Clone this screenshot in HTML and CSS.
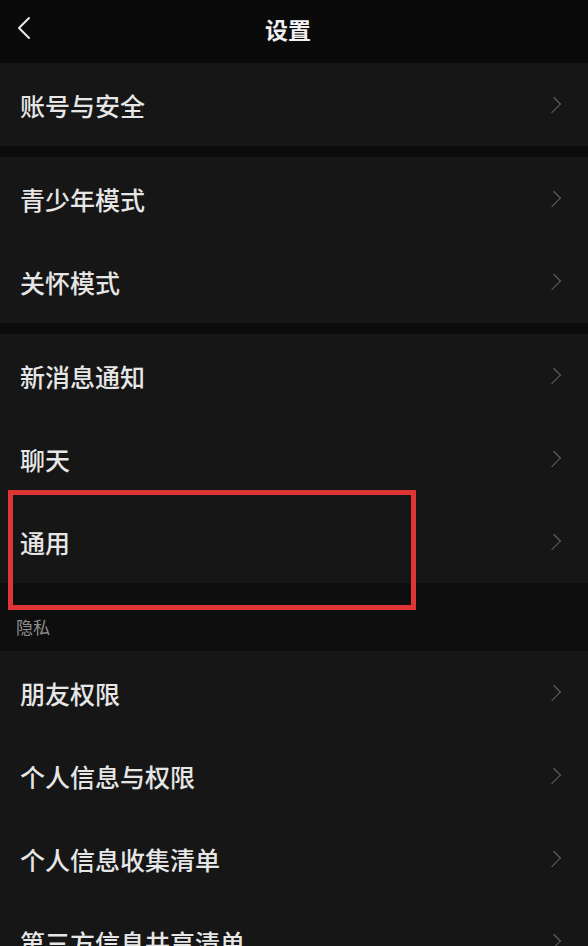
FILE: index.html
```html
<!doctype html>
<html lang="zh-CN">

<head>
  <meta charset="UTF-8" />
  <meta name="viewport" content="width=device-width, initial-scale=1.0" />
  <title>设置</title>
  <link rel="stylesheet" href="styles.css">
</head>

<body>
  <header class="nav">
    <svg class="back" width="14" height="24" viewBox="0 0 14 24">
      <path d="M12 2 L2 12 L12 22" fill="none" stroke="#e8e8e8" stroke-width="2" stroke-linecap="round" stroke-linejoin="round" />
    </svg>
    <h1 class="title">设置</h1>
  </header>

  <section class="group">
    <div class="row"><span>账号与安全</span><i class="arrow"></i></div>
  </section>

  <section class="group">
    <div class="row"><span>青少年模式</span><i class="arrow"></i></div>
    <div class="row"><span>关怀模式</span><i class="arrow"></i></div>
  </section>

  <section class="group">
    <div class="row"><span>新消息通知</span><i class="arrow"></i></div>
    <div class="row"><span>聊天</span><i class="arrow"></i></div>
    <div class="row marked"><span>通用</span><i class="arrow"></i></div>
  </section>

  <div class="label">隐私</div>

  <section class="group">
    <div class="row"><span>朋友权限</span><i class="arrow"></i></div>
    <div class="row"><span>个人信息与权限</span><i class="arrow"></i></div>
    <div class="row"><span>个人信息收集清单</span><i class="arrow"></i></div>
    <div class="row"><span>第三方信息共享清单</span><i class="arrow"></i></div>
  </section>
</body>

</html>
```

FILE: styles.css
```css
* {
  margin: 0;
  padding: 0;
  box-sizing: border-box;
}

body {
  background: #0b0b0b;
  color: #e6e6e6;
  font-family: "Noto Sans CJK SC", "Noto Sans", sans-serif;
  height: 946px;
  overflow: hidden;
}

.nav {
  height: 63px;
  display: flex;
  align-items: center;
  justify-content: center;
  position: relative;
  background: #0a0a0a;
}

.back {
  position: absolute;
  left: 17px;
  top: 16px;
}

.title {
  font-size: 23px;
  font-weight: 700;
  color: #f0f0f0;
  margin: -6px 0 0 -12px;
}

.group {
  background: #161616;
  margin-bottom: 11px;
}

.row {
  height: 83px;
  display: flex;
  align-items: center;
  justify-content: space-between;
  padding: 0 30px 0 20px;
  font-size: 25px;
  font-weight: 500;
  position: relative;
}

.arrow {
  width: 10px;
  height: 10px;
  border-top: 1.5px solid #5e5e5e;
  border-right: 1.5px solid #5e5e5e;
  transform: rotate(45deg) scaleY(1.3);
}

/* red annotation box */
.marked::after {
  content: "";
  position: absolute;
  left: 8px;
  top: -10px;
  width: 398px;
  height: 110px;
  border: 5px solid #e03535;
}

.label {
  margin-top: -11px;
  height: 68px;
  padding: 31px 0 0 16px;
  font-size: 17px;
  color: #8c8c8c;
  background: #0e0e0e;
}
```
